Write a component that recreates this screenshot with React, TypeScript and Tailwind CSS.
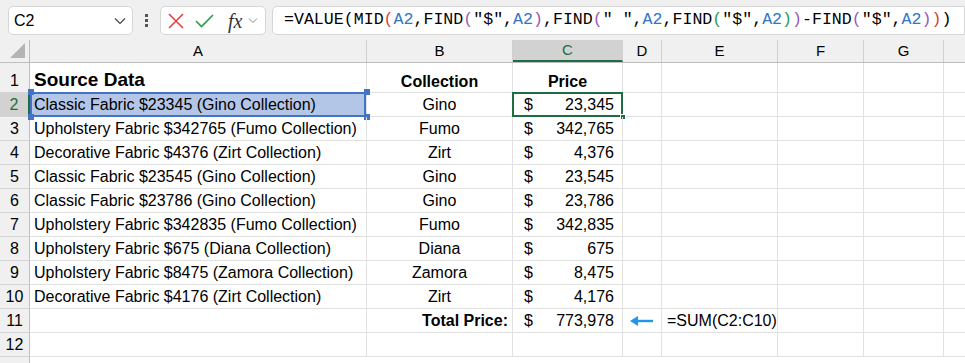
import React from "react";

const cols = [30, 337, 146, 110, 39, 116, 86, 80, 60];
const letters = ["A", "B", "C", "D", "E", "F", "G", ""];

const rows = [
  { a: "Classic Fabric $23345 (Gino Collection)", b: "Gino", c: "23,345" },
  { a: "Upholstery Fabric $342765 (Fumo Collection)", b: "Fumo", c: "342,765" },
  { a: "Decorative Fabric $4376 (Zirt Collection)", b: "Zirt", c: "4,376" },
  { a: "Classic Fabric $23545 (Gino Collection)", b: "Gino", c: "23,545" },
  { a: "Classic Fabric $23786 (Gino Collection)", b: "Gino", c: "23,786" },
  { a: "Upholstery Fabric $342835 (Fumo Collection)", b: "Fumo", c: "342,835" },
  { a: "Upholstery Fabric $675 (Diana Collection)", b: "Diana", c: "675" },
  { a: "Upholstery Fabric $8475 (Zamora Collection)", b: "Zamora", c: "8,475" },
  { a: "Decorative Fabric $4176 (Zirt Collection)", b: "Zirt", c: "4,176" },
];

// formula tokens: [text, colour]
const K = "text-black";
const R = "text-[#e03c31]";
const P = "text-[#9b59b6]";
const G = "text-[#2e9a4f]";
const B = "text-[#2f75c8]";
const formula: [string, string][] = [
  ["=VALUE(", K], ["MID", K], ["(", R], ["A2", B], [",FIND", K], ["(", P], ['"$",', K], ["A2", B], [")", P],
  [",FIND", K], ["(", P], ['" ",', K], ["A2", B], [",FIND", K], ["(", G], ['"$",', K], ["A2", B], [")", G],
  [")", P], ["-FIND", K], ["(", P], ['"$",', K], ["A2", B], [")", P], [")", R], [")", K],
];

function Cell({ w, className = "", children }: { w: number; className?: string; children?: React.ReactNode }) {
  return (
    <div
      style={{ width: w }}
      className={`shrink-0 h-full border-r border-b border-[#e1e1e1] flex items-center leading-[20px] whitespace-nowrap ${className}`}
    >
      {children}
    </div>
  );
}

function RowHead({ n, active }: { n: number; active?: boolean }) {
  return (
    <div
      style={{ width: cols[0] }}
      className={`shrink-0 h-full flex items-center justify-center leading-[20px] border-b border-[#d4d4d4] ${
        active ? "bg-[#d2d2d2] text-[#1e6e42] border-r-2 border-r-[#1e6e42]" : "bg-[#f0f0f0] border-r border-r-[#bdbdbd]"
      }`}
    >
      {n}
    </div>
  );
}

function Price({ v }: { v: string }) {
  return (
    <div className="flex w-full justify-between pl-[11px] pr-[8px]">
      <span>$</span>
      <span>{v}</span>
    </div>
  );
}

export default function App() {
  return (
    <div className="w-[965px] h-[363px] overflow-hidden bg-white text-black font-['Liberation_Sans',Arial,sans-serif]">
      {/* formula bar */}
      <div className="h-[40px] bg-[#f0f0f0] flex items-center pl-[8px] pt-[1px]">
        <div className="w-[125px] h-[29px] bg-white border border-[#d6d6d6] rounded-[5px] flex items-center justify-between pl-[5px] pr-[6px] text-[16px]">
          <span>C2</span>
          <svg width="12" height="8" viewBox="0 0 12 8" fill="none" stroke="#444" strokeWidth="1.2">
            <path d="M1 1.5 L6 6.5 L11 1.5" />
          </svg>
        </div>
        <div className="w-[10px] ml-[8px] flex flex-col items-center gap-[2px]">
          <span className="w-[3px] h-[3px] bg-[#555]" />
          <span className="w-[3px] h-[3px] bg-[#555]" />
          <span className="w-[3px] h-[3px] bg-[#555]" />
        </div>
        <div className="w-[106px] ml-[9px] h-[29px] bg-white border border-[#d6d6d6] rounded-[5px] flex items-center pl-[7px]">
          <svg width="16" height="16" viewBox="0 0 16 16" stroke="#e8413a" strokeWidth="1.6" fill="none">
            <path d="M1 1 L15 15 M15 1 L1 15" />
          </svg>
          <svg className="ml-[11px]" width="19" height="14" viewBox="0 0 19 14" stroke="#2f9a4a" strokeWidth="1.6" fill="none">
            <path d="M1 7 L6.5 12.5 L18 1" />
          </svg>
          <span className="ml-[14px] font-['Liberation_Serif',serif] italic text-[20px] leading-none text-[#333]">fx</span>
          <svg className="ml-[6px]" width="10" height="7" viewBox="0 0 10 7" fill="none" stroke="#888" strokeWidth="1">
            <path d="M1 1.5 L5 5.5 L9 1.5" />
          </svg>
        </div>
        <div className="flex-1 ml-[6px] h-[29px] bg-white border border-[#d6d6d6] rounded-l-[5px] flex items-center pl-[11px] font-['Liberation_Mono',monospace] text-[16.6px] whitespace-nowrap">
          {formula.map(([t, c], i) => (
            <span key={i} className={c}>
              {t}
            </span>
          ))}
        </div>
      </div>

      {/* column headers */}
      <div className="h-[23px] flex bg-[#f0f0f0] text-[15px] border-b border-[#bdbdbd]">
        <div style={{ width: cols[0] }} className="shrink-0 h-full border-r border-[#bdbdbd] relative">
          <svg className="absolute right-[4px] bottom-[4px]" width="15" height="15" viewBox="0 0 15 15">
            <path d="M15 0 L15 15 L0 15 Z" fill="#b4b4b4" />
          </svg>
        </div>
        {letters.map((l, i) => (
          <div
            key={i}
            style={{ width: cols[i + 1] }}
            className={`shrink-0 h-full flex items-center justify-center border-r border-[#d0d0d0] ${
              l === "C" ? "bg-[#d2d2d2] text-[#1e6e42] border-b-2 border-b-[#1e6e42]" : ""
            }`}
          >
            {l}
          </div>
        ))}
      </div>

      {/* row 1 */}
      <div className="h-[30px] flex text-[16px]">
        <div
          style={{ width: cols[0] }}
          className="shrink-0 h-full flex items-end justify-center leading-[20px] pb-[1px] border-b border-[#d4d4d4] bg-[#f0f0f0] border-r border-r-[#bdbdbd]"
        >
          1
        </div>
        <Cell w={cols[1]} className="pl-[4px] font-bold text-[19px] !items-end !leading-[22px] pb-[1px]">Source Data</Cell>
        <Cell w={cols[2]} className="justify-center font-bold !items-end">Collection</Cell>
        <Cell w={cols[3]} className="justify-center font-bold !items-end">Price</Cell>
        {cols.slice(4).map((w, i) => (
          <Cell key={i} w={w} />
        ))}
      </div>

      {rows.map((r, i) => {
        const n = i + 2;
        const active = n === 2;
        return (
          <div key={n} className="h-[24px] flex text-[16px]">
            <RowHead n={n} active={active} />
            <Cell w={cols[1]} className={`pl-[4px] relative ${active ? "bg-[#b4c6e7]" : ""}`}>
              <span>{r.a}</span>
              {active && (
                <>
                  <div className="absolute inset-x-0 top-[-1px] bottom-[-1px] border-2 border-[#4472c4]" />
                  <div className="absolute right-[-4px] top-[-4px] w-[6px] h-[6px] bg-[#4472c4]" />
                  <div className="absolute right-[-4px] bottom-[-4px] w-[6px] h-[6px] bg-[#4472c4]" />
                  <div className="absolute left-[-2px] bottom-[-4px] w-[6px] h-[6px] bg-[#4472c4]" />
                  <div className="absolute left-[-2px] top-[-4px] w-[6px] h-[6px] bg-[#4472c4]" />
                </>
              )}
            </Cell>
            <Cell w={cols[2]} className="justify-center">{r.b}</Cell>
            <Cell w={cols[3]} className="relative">
              <Price v={r.c} />
              {active && (
                <>
                  <div className="absolute left-[-1px] right-[-1px] top-[-1px] bottom-[-1px] border-2 border-[#1e6e42]" />
                  <div className="absolute right-[-4px] bottom-[-4px] w-[6px] h-[6px] bg-[#1e6e42] border border-white" />
                </>
              )}
            </Cell>
            {cols.slice(4).map((w, j) => (
              <Cell key={j} w={w} />
            ))}
          </div>
        );
      })}

      {/* row 11 */}
      <div className="h-[24px] flex text-[16px]">
        <RowHead n={11} />
        <Cell w={cols[1]} />
        <Cell w={cols[2]} className="justify-end pr-[4px] font-bold">Total Price:</Cell>
        <Cell w={cols[3]}>
          <Price v="773,978" />
        </Cell>
        <Cell w={cols[4]} className="justify-center">
          <svg width="24" height="10" viewBox="0 0 24 10" fill="none">
            <path d="M23 5 L4 5" stroke="#1f96ea" strokeWidth="2.4" />
            <path d="M0 5 L8 0 L8 10 Z" fill="#1f96ea" />
          </svg>
        </Cell>
        <Cell w={cols[5]} className="pl-[5px]">=SUM(C2:C10)</Cell>
        {cols.slice(6).map((w, j) => (
          <Cell key={j} w={w} />
        ))}
      </div>

      {/* row 12 */}
      <div className="h-[24px] flex text-[16px]">
        <RowHead n={12} />
        {cols.slice(1).map((w, j) => (
          <Cell key={j} w={w} />
        ))}
      </div>
      <div className="h-[6px] flex">
        <div style={{ width: cols[0] }} className="bg-[#f0f0f0] border-r border-[#bdbdbd]" />
      </div>
    </div>
  );
}
